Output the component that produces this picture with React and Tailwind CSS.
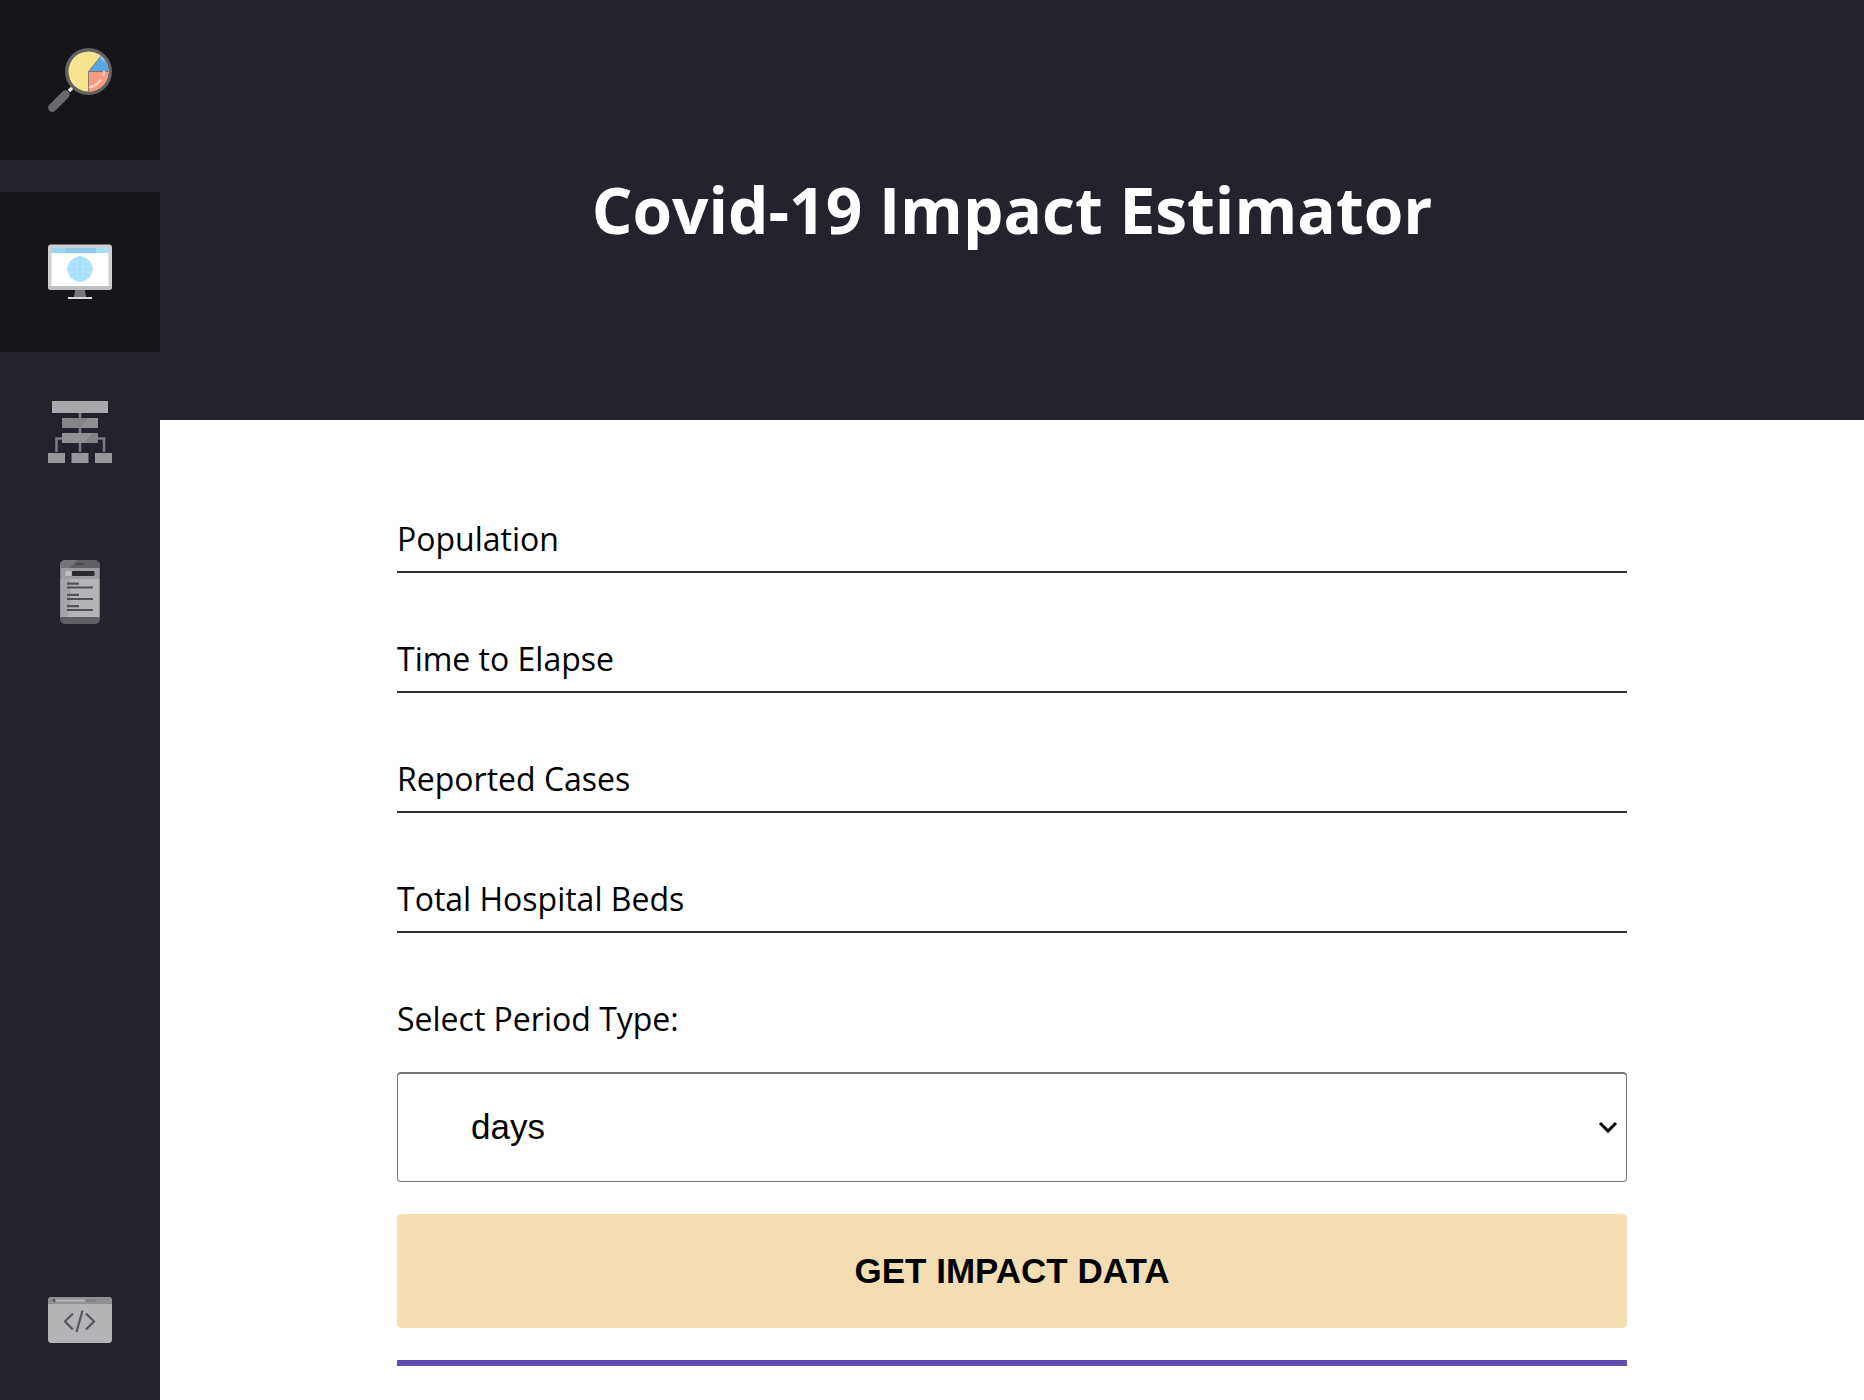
import React from "react";

function AnalysisLogo() {
  return (
    <svg viewBox="0 0 64 64" className="size-16" aria-hidden="true">
      <path d="M21 43l4-4" stroke="#e6e6e6" strokeWidth="3.4" />
      <path d="M4.3 59.7L17.5 46.5" stroke="#6a696b" strokeWidth="8.4" strokeLinecap="round" />
      <circle cx="40.5" cy="23.5" r="23.5" fill="#646363" />
      <circle cx="40.5" cy="23.5" r="20" fill="#f5e58f" />
      <path d="M40.5 23.5L53 8.2A20 20 0 0 1 60.5 23.5z" fill="#5ba6e6" />
      <path d="M52 9.5l1.5-1.3a20 20 0 0 1 4 4.6l-2.5 1z" fill="#7fc0f2" />
      <path d="M40.5 23.5h20a20 20 0 0 1-20 20z" fill="#fa9a80" />
      <path d="M40.5 43.5v-20h20M40.5 23.5L53 8.2" fill="none" stroke="#6f665a" strokeWidth="0.8" />
      <path d="M56 23q.2 2.500-.8 5M53 31.500Q48.500 38 40.800 39.500" fill="none" stroke="#ffd3c8" strokeWidth="2.200" />
    </svg>
  );
}

function WebIcon() {
  return (
    <svg viewBox="0 2 64 64" className="size-16" aria-hidden="true">
      <path d="M27.500 49h9l1.500 10H26z" fill="#77777a" />
      <rect x="20" y="59" width="24" height="2" fill="#dadadb" />
      <rect x="0" y="6.500" width="64" height="45.500" rx="3" fill="#cfced1" />
      <path d="M0 48v1a3 3 0 0 0 3 3h58a3 3 0 0 0 3-3v-1z" fill="#c0c0c2" />
      <rect x="3.500" y="10" width="57" height="38" fill="#fff" />
      <rect x="3.500" y="10" width="57" height="5" fill="#8fc8ee" />
      <rect x="48" y="10" width="12.500" height="5" fill="#a5e1fa" />
      <rect x="3.500" y="10" width="14" height="5" fill="#9bd6f5" />
      <circle cx="32" cy="31" r="12.600" fill="#b0e5fd" />
      <g fill="none" stroke="#9fd9f5" strokeWidth="0.8">
        <ellipse cx="32" cy="31" rx="6.500" ry="12.600" />
        <path d="M32 18.400v25.200M19.400 31h25.200M22 24q10 5 20 0M22 38q10-5 20 0" />
      </g>
    </svg>
  );
}

function TreeIcon() {
  return (
    <svg viewBox="0 0 64 64" className="size-16" aria-hidden="true">
      <path d="M32 13v39M8.500 52V38.500H56V52" fill="none" stroke="#79797f" strokeWidth="2.600" />
      <rect x="4" y="1" width="56" height="12" fill="#a9a9ad" />
      <rect x="14" y="18" width="36" height="10" fill="#86858a" />
      <path d="M32 28l8-10h10v10z" fill="#8e8e93" />
      <rect x="14" y="33" width="36" height="10" fill="#909095" />
      <path d="M36 43l9-10h5v10z" fill="#828287" />
      <rect x="0" y="53" width="17" height="10" fill="#96969b" />
      <rect x="23.500" y="53" width="17" height="10" fill="#96969b" />
      <rect x="47" y="53" width="17" height="10" fill="#96969b" />
    </svg>
  );
}

function MobileIcon() {
  return (
    <svg viewBox="0 0 64 64" className="size-16" aria-hidden="true">
      <rect x="12" y="0" width="40" height="64" rx="5" fill="#5f5f65" />
      <path d="M17 0h12l-7 8H12V5a5 5 0 0 1 5-5z" fill="#74747a" />
      <rect x="28" y="3" width="8" height="2" fill="#48484e" />
      <rect x="12.500" y="8" width="39" height="11" fill="#9c9ca0" />
      <rect x="12.500" y="19" width="39" height="38" fill="#b4b4b7" />
      <path d="M12.500 19h10v24l-3 14h-7z" fill="#a5a5a9" />
      <rect x="17.500" y="11" width="6" height="5" fill="#bdbdc0" />
      <rect x="24" y="11" width="22.500" height="5" rx="1" fill="#2a2a31" />
      <path d="M19 23.700h12M19 34.800h12M19 46.200h12" stroke="#55545a" strokeWidth="2.200" />
      <path d="M19 27.500h26M19 39h26M19 50h26" stroke="#504f55" strokeWidth="2.200" />
    </svg>
  );
}

function CodeIcon() {
  return (
    <svg viewBox="0 0 64 64" className="size-16" aria-hidden="true">
      <rect x="0" y="9" width="64" height="46" rx="3.500" fill="#b4b4b7" />
      <path d="M0 16v-3.500A3.500 3.500 0 0 1 3.500 9h57a3.500 3.500 0 0 1 3.500 3.500V16z" fill="#8f8f94" />
      <rect x="8" y="11.500" width="29" height="2.200" fill="#b4b4b7" />
      <rect x="38" y="11.500" width="10" height="2" fill="#7d7d82" />
      <circle cx="6" cy="12.600" r="1.300" fill="#55555b" />
      <path d="M25 25.500L17 33.500l8 8M38 25.500l8 8-8 8M34.500 22.500L28.500 44" fill="none" stroke="#57575c" strokeWidth="2.200" />
    </svg>
  );
}

function NavItem({ label, active, children }) {
  return (
    <a
      href="#"
      aria-label={label}
      className={
        active
          ? "flex h-40 items-center justify-center bg-[#15151a]"
          : "flex h-40 items-center justify-center"
      }
    >
      {children}
    </a>
  );
}

function Field({ id, label }) {
  return (
    <div className="relative mb-[58px]">
      <input
        id={id}
        type="text"
        className="block h-[62px] w-full border-b-2 border-[#333] bg-transparent pt-1 text-[32px] outline-none"
      />
      <label htmlFor={id} className="absolute top-[6px] left-0 text-[32px] leading-[44px]">
        {label}
      </label>
    </div>
  );
}

const fields = [
  { id: "population", label: "Population" },
  { id: "time", label: "Time to Elapse" },
  { id: "cases", label: "Reported Cases" },
  { id: "beds", label: "Total Hospital Beds" },
];

export default function App() {
  return (
    <div className="flex min-h-screen bg-white font-['Open_Sans',sans-serif] text-black">
      <nav className="flex w-40 shrink-0 flex-col bg-[#23232e]">
        <div className="mb-8">
          <NavItem label="Home" active>
            <AnalysisLogo />
          </NavItem>
        </div>
        <NavItem label="Estimator" active>
          <WebIcon />
        </NavItem>
        <NavItem label="Structure">
          <TreeIcon />
        </NavItem>
        <NavItem label="Mobile">
          <MobileIcon />
        </NavItem>
        <div className="mt-auto">
          <NavItem label="Source code">
            <CodeIcon />
          </NavItem>
        </div>
      </nav>
      <main className="min-w-0 grow">
        <header className="bg-[#23232e] px-8 pt-[166px] pb-[166px]">
          <h1 className="text-center text-[64px] leading-[88px] font-bold text-white">
            Covid-19 Impact Estimator
          </h1>
        </header>
        <form className="mx-auto max-w-[1230px] pt-[91px]" onSubmit={(e) => e.preventDefault()}>
          {fields.map((f) => (
            <Field key={f.id} id={f.id} label={f.label} />
          ))}
          <label htmlFor="period" className="block pt-[6px] pb-[31px] text-[32px] leading-[44px]">
            Select Period Type:
          </label>
          <div className="relative mb-8">
            <select
              id="period"
              defaultValue="days"
              className="block h-[110px] w-full appearance-none rounded-[4px] border border-t-2 border-[#767676] bg-white px-[73px] font-['Liberation_Sans',sans-serif] text-[35px]"
            >
              <option value="days">days</option>
              <option value="weeks">weeks</option>
              <option value="months">months</option>
            </select>
            <svg
              viewBox="0 0 20 12"
              className="pointer-events-none absolute top-[49px] right-[9px] h-3 w-5"
              aria-hidden="true"
            >
              <path d="M2 2l8 8 8-8" fill="none" stroke="#000" strokeWidth="3" />
            </svg>
          </div>
          <button
            type="submit"
            className="mb-8 block h-[114px] w-full rounded-[5px] bg-[#f3deb3] font-['Liberation_Sans',sans-serif] text-[35px] font-bold"
          >
            GET IMPACT DATA
          </button>
          <hr className="h-[6px] border-0 bg-[#624bb0]" />
        </form>
      </main>
    </div>
  );
}
